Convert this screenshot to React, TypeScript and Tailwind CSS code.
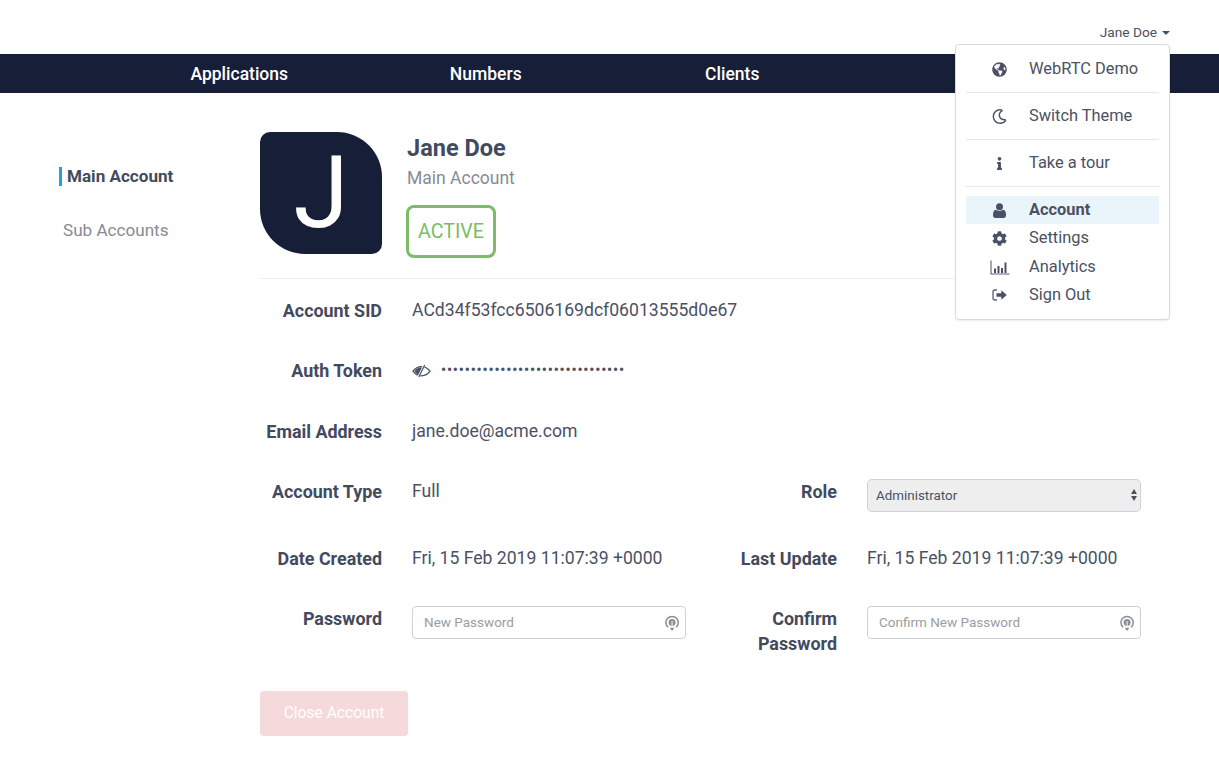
import { FaCog, FaGlobeAmericas, FaInfo, FaRegMoon } from "react-icons/fa";

const labelClass = "text-right text-[17.9px] font-bold leading-[25px] text-[#434a5e]";
const valueClass = "text-[17.6px] leading-[25px] text-[#4a5164]";

function UserIcon() {
  return (
    <svg width="13" height="15" viewBox="0 0 13 15" fill="#4a5164">
      <circle cx="6.5" cy="3.7" r="3.5" />
      <path d="M2.8 6.800C4.800 8.300 8.200 8.300 10.200 6.800C12 7.300 13 9 13 11.500V12.500C13 14 12 15 10.700 15H2.300C1 15 0 14 0 12.500V11.500C0 9 1 7.300 2.800 6.800z" />
    </svg>
  );
}

function BarsIcon() {
  return (
    <svg width="20" height="15" viewBox="0 0 20 15" fill="none">
      <path d="M1 0.5V14H19.5" stroke="#5a6072" strokeWidth="1.1" />
      <path d="M4 8.500h2V13H4zM7.500 6h2V13h-2zM11 8h2v5h-2zM14.500 2.500h2V13h-2z" fill="#4a5164" />
    </svg>
  );
}

function SignOutIcon() {
  return (
    <svg width="15" height="12" viewBox="0 0 15 12" fill="none">
      <path d="M5 1H3a2 2 0 0 0-2 2v6a2 2 0 0 0 2 2h2" stroke="#5a6072" strokeWidth="1.3" />
      <path d="M4.500 4.200h4.800V1.200L14.800 6 9.300 10.800V7.800H4.500z" fill="#4a5164" />
    </svg>
  );
}

function EyeOffIcon() {
  return (
    <svg width="19" height="14" viewBox="0 0 19 14" fill="none">
      <path d="M1 7.200C3.500 3.800 6.500 2.600 9.500 2.600s6 1.200 8.500 4.600c-2.500 3.400-5.500 4.600-8.500 4.600S3.500 10.600 1 7.200z" stroke="#4a5164" strokeWidth="1.300" />
      <path d="M2.500 7.200c1.600-2.400 3.600-3.600 6-3.900l2 .8-3.400 6.800C5.200 10.400 3.700 9 2.500 7.200z" fill="#4a5164" />
      <path d="M12.500 0.800L6.300 13.200" stroke="#fff" strokeWidth="2.200" />
      <path d="M12.800 1L6.800 13" stroke="#4a5164" strokeWidth="1.200" />
    </svg>
  );
}

function KeyIcon() {
  return (
    <svg width="15" height="18" viewBox="0 0 15 18" fill="none">
      <path d="M3.300 13.500A6.500 6.500 0 1 1 11.700 13.500" stroke="#8a8f99" strokeWidth="1.600" />
      <circle cx="7.500" cy="8.500" r="3.700" fill="#8a8f99" />
      <path d="M7.500 7V15" stroke="#fff" strokeWidth="1" />
      <path d="M5 14L7.500 17.500L10 14z" fill="#8a8f99" />
    </svg>
  );
}

function PasswordInput({ placeholder }: { placeholder: string }) {
  return (
    <div className="flex h-[33px] items-center justify-between rounded-[4px] border border-[#cfd1d4] bg-white pl-[11px] pr-[6px]">
      <input
        placeholder={placeholder}
        className="w-full bg-transparent text-[13.5px] text-[#4a5164] outline-none placeholder:text-[#9a9da3]"
      />
      <KeyIcon />
    </div>
  );
}

function MenuRow({
  icon,
  label,
  className,
}: {
  icon: React.ReactNode;
  label: string;
  className?: string;
}) {
  return (
    <div className={`flex items-center ${className ?? ""}`}>
      <span className="flex w-[63px] items-center justify-center pl-[5px] pr-[1px] text-[#4a5164]">{icon}</span>
      <span className="text-[16.4px]">{label}</span>
    </div>
  );
}

export default function App() {
  return (
    <div className="relative h-[771px] w-[1219px] overflow-hidden bg-white font-['Roboto',sans-serif] text-[#4a5164]">
      <div className="flex h-[54px] items-start justify-end pr-[49px] pt-[24px]">
        <span className="flex items-center gap-[5px] text-[13.7px] leading-4">
          Jane Doe
          <span className="mt-[2px] h-0 w-0 border-x-[4px] border-t-[4px] border-x-transparent border-t-[#4a5164]" />
        </span>
      </div>

      <nav className="flex h-[39px] items-center bg-[#161f37] pl-[116px] pt-[1px] text-[17.5px] font-medium text-white">
        {["Applications", "Numbers", "Clients"].map((item) => (
          <a key={item} className="w-[246.5px] text-center">
            {item}
          </a>
        ))}
      </nav>

      <div className="flex">
        <aside className="w-[260px] pl-[59px] pt-[74px]">
          <div className="flex h-[19px] items-center border-l-[3px] border-[#1ea3dc] pl-[5px] pt-[1px] text-[17.1px] font-bold text-[#434a5e]">
            Main Account
          </div>
          <div className="mt-[35px] pl-[4px] text-[17.1px] leading-[19px] text-[#868b96]">Sub Accounts</div>
        </aside>

        <main className="w-[880px] pt-[39px]">
          <div className="flex gap-[25px] border-b border-[#eeeeee] pb-[20px]">
            <div className="flex h-[122px] w-[122px] items-center justify-center rounded-bl-[45px] rounded-br-[10px] rounded-tl-[10px] rounded-tr-[45px] bg-[#161f37] text-[100px] leading-none text-white">
              J
            </div>
            <div>
              <h1 className="mt-[2px] text-[23.5px] font-bold leading-7 text-[#434a5e]">Jane Doe</h1>
              <p className="mt-[4px] text-[17.5px] leading-[25px] text-[#868b96]">Main Account</p>
              <span className="-ml-[1px] mt-[14px] flex h-[53px] w-[90px] items-center justify-center rounded-[8px] border-[3px] border-[#7dbb67] text-[19.6px] text-[#7dbb67]">
                ACTIVE
              </span>
            </div>
          </div>

          <div className="grid grid-cols-[122px_274px_121px_274px] gap-x-[30px] pt-[19px]">
            <div className={labelClass}>Account SID</div>
            <div className={`${valueClass} col-span-3`}>ACd34f53fcc6506169dcf06013555d0e67</div>

            <div className={`${labelClass} mt-[35px]`}>Auth Token</div>
            <div className="col-span-3 mt-[35px] flex h-[25px] items-center gap-[10px]">
              <EyeOffIcon />
              <span className="text-[14px] font-bold tracking-[0.9px] text-[#4a5164]">
                {"•".repeat(31)}
              </span>
            </div>

            <div className={`${labelClass} mt-[36px]`}>Email Address</div>
            <div className={`${valueClass} col-span-3 mt-[36px]`}>jane.doe@acme.com</div>

            <div className={`${labelClass} mt-[35px]`}>Account Type</div>
            <div className={`${valueClass} mt-[35px]`}>Full</div>
            <div className={`${labelClass} mt-[35px]`}>Role</div>
            <div className="relative mt-[35px] h-[33px]">
              <select className="h-full w-full appearance-none rounded-[5px] border border-[#cfd1d4] bg-[#eeeeee] pl-[8px] pt-[1px] text-[13.4px] text-[#4a5164] outline-none">
                <option>Administrator</option>
              </select>
              <span className="pointer-events-none absolute right-[4px] top-[10px] flex flex-col gap-[2px]">
                <span className="h-0 w-0 border-x-[3.5px] border-b-[5px] border-x-transparent border-b-[#4a5164]" />
                <span className="h-0 w-0 border-x-[3.5px] border-t-[5px] border-x-transparent border-t-[#4a5164]" />
              </span>
            </div>

            <div className={`${labelClass} mt-[34px]`}>Date Created</div>
            <div className={`${valueClass} mt-[34px]`}>Fri, 15 Feb 2019 11:07:39 +0000</div>
            <div className={`${labelClass} mt-[34px]`}>Last Update</div>
            <div className={`${valueClass} mt-[34px]`}>Fri, 15 Feb 2019 11:07:39 +0000</div>

            <div className={`${labelClass} mt-[35px]`}>Password</div>
            <div className="mt-[35px]">
              <PasswordInput placeholder="New Password" />
            </div>
            <div className={`${labelClass} mt-[35px]`}>Confirm Password</div>
            <div className="mt-[35px]">
              <PasswordInput placeholder="Confirm New Password" />
            </div>
          </div>

          <button className="mt-[35px] flex h-[45px] w-[148px] items-center justify-center rounded-[4px] bg-[#f6d9db] text-[15.6px] text-white">
            Close Account
          </button>
        </main>
      </div>

      {/* user dropdown, sits over the nav */}
      <div className="absolute left-[955px] top-[44px] w-[215px] rounded-[4px] border border-[#d9dadc] bg-white px-[10px] pb-[10px] pt-[10px] shadow-[0_1px_2px_rgba(0,0,0,0.08)]">
        <MenuRow icon={<FaGlobeAmericas size={15} />} label="WebRTC Demo" className="h-[28px]" />
        <div className="mb-[9px] mt-[9px] h-px bg-[#e8e8e8]" />
        <MenuRow icon={<FaRegMoon size={15} />} label="Switch Theme" className="h-[28px]" />
        <div className="mb-[9px] mt-[9px] h-px bg-[#e8e8e8]" />
        <MenuRow icon={<FaInfo size={13} />} label="Take a tour" className="h-[28px]" />
        <div className="mb-[9px] mt-[9px] h-px bg-[#e8e8e8]" />
        <div className="flex h-[28px] items-center bg-[#eaf5fb] font-bold">
          <span className="flex w-[63px] items-center justify-center pl-[5px] pr-[1px]"><UserIcon /></span>
          <span className="text-[16.4px]">Account</span>
        </div>
        <MenuRow icon={<FaCog size={15} />} label="Settings" className="h-[29px]" />
        <MenuRow icon={<BarsIcon />} label="Analytics" className="h-[28px]" />
        <MenuRow icon={<SignOutIcon />} label="Sign Out" className="h-[28px]" />
      </div>
    </div>
  );
}
